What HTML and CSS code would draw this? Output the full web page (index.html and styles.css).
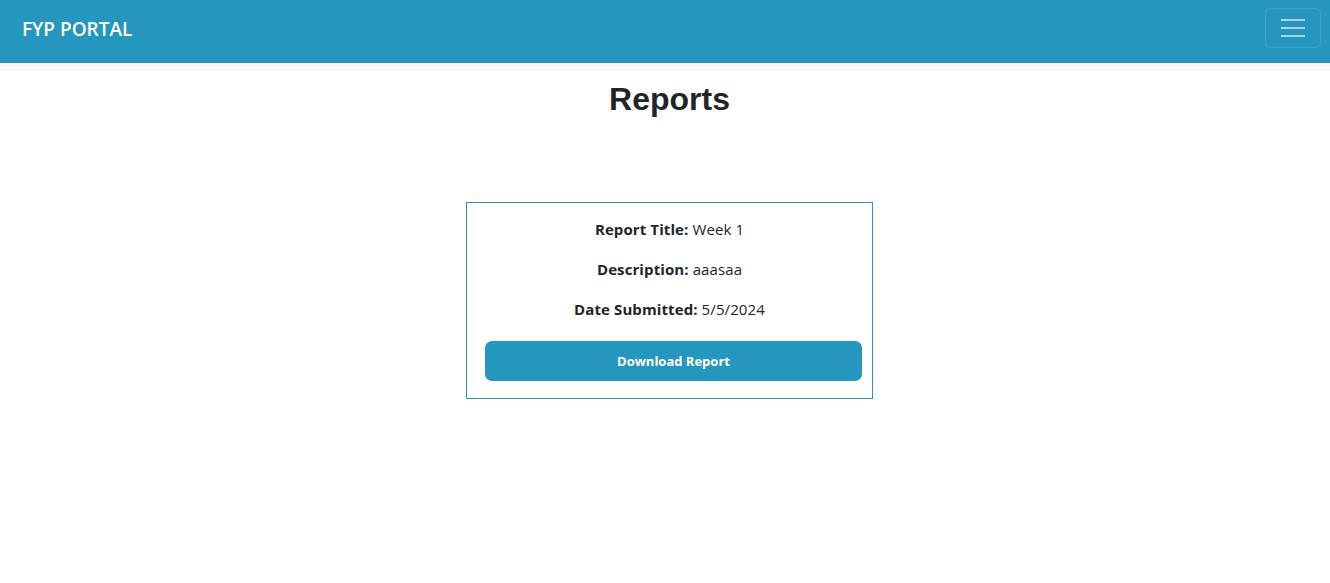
FILE: index.html
```html
<!DOCTYPE html>
<html>
<head>
<meta charset="utf-8">
<link rel="stylesheet" href="styles.css">
</head>
<body>
<nav class="navbar">
  <span class="brand">FYP PORTAL</span>
  <button class="toggler" aria-label="menu">
    <span class="bar"></span><span class="bar"></span><span class="bar"></span>
  </button>
</nav>
<div class="strip"></div>
<main class="content">
  <h1 class="title">Reports</h1>
  <div class="card">
    <p class="row"><strong>Report Title:</strong> Week 1</p>
    <p class="row"><strong>Description:</strong> aaasaa</p>
    <p class="row"><strong>Date Submitted:</strong> 5/5/2024</p>
    <button class="download">Download Report</button>
  </div>
</main>
</body>
</html>
```
FILE: styles.css
```css
* { box-sizing: border-box; }
body {
  margin: 0;
  font-family: "Open Sans", "Noto Sans", sans-serif;
  color: #212529;
  background: #fff;
}
.navbar {
  height: 63px;
  background: #2596be;
  display: flex;
  align-items: center;
  justify-content: space-between;
  padding: 0 9px 0 22px;
}
.brand {
  color: #fff;
  font-weight: 600;
  font-size: 19px;
  margin-top: -5px;
}
.toggler {
  width: 56px;
  height: 40px;
  margin-top: -8px;
  border: 1px solid rgba(255,255,255,0.12);
  border-radius: 6px;
  background: transparent;
  display: flex;
  flex-direction: column;
  align-items: center;
  justify-content: center;
  gap: 6px;
  padding: 0;
}
.bar {
  display: block;
  width: 24px;
  height: 2px;
  background: rgba(255,255,255,0.6);
}
.strip { height: 8px; background: #f8f9fa; }
.content {
  display: flex;
  flex-direction: column;
  align-items: center;
  padding-left: 9px;
}
.title {
  font-family: "Liberation Sans", Arial, sans-serif;
  font-weight: 700;
  font-size: 32px;
  margin: 9px 0 0;
  line-height: 38px;
  color: #212529;
}
.card {
  margin-top: 84px;
  width: 407px;
  border: 1px solid #2596be;
  padding: 14px 10px 17px;
  display: flex;
  flex-direction: column;
  align-items: center;
}
.row {
  margin: 0 0 16px;
  font-size: 15px;
  line-height: 24px;
  letter-spacing: 0.1px;
}
.row strong { font-weight: 700; }
.download {
  margin-top: 4px;
  margin-left: 8px;
  width: 377px;
  height: 40px;
  border: none;
  border-radius: 7px;
  background: #2596be;
  color: #fff;
  font-family: "Open Sans", "Noto Sans", sans-serif;
  font-weight: 700;
  font-size: 13px;
}
```
